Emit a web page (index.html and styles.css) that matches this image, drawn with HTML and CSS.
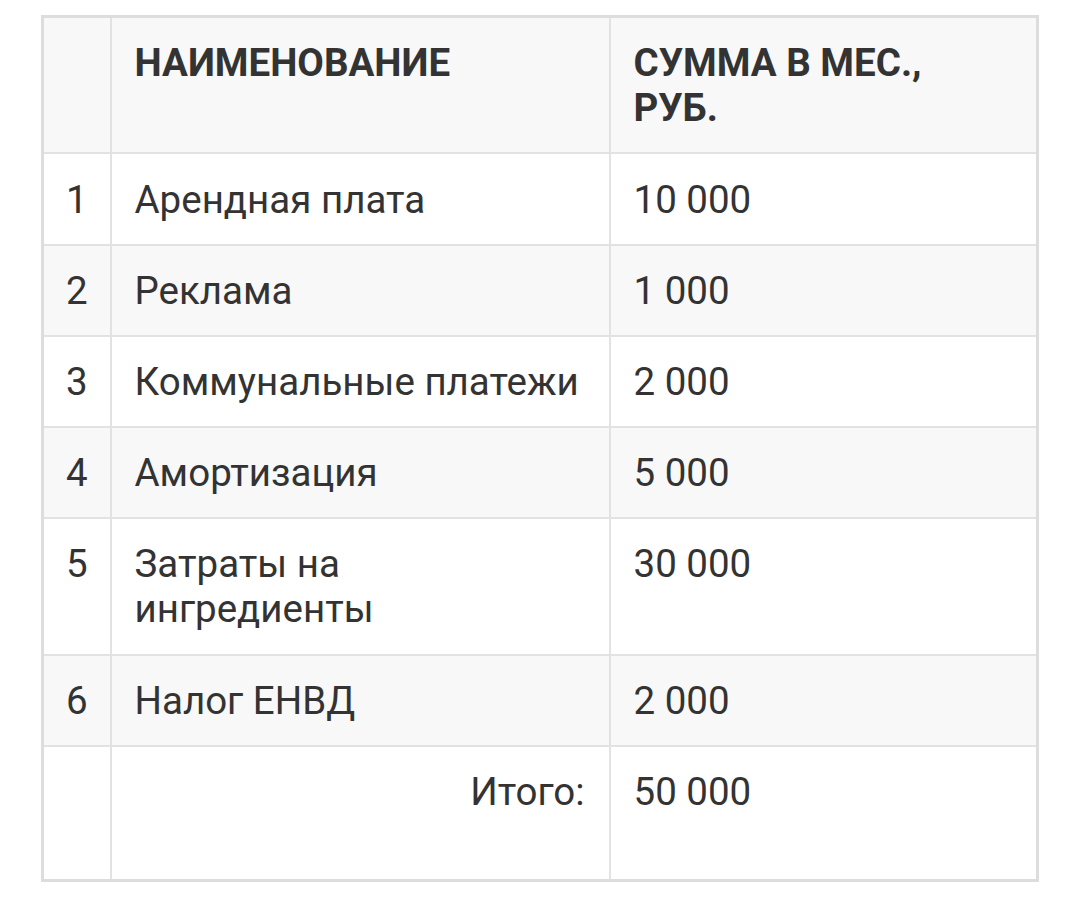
FILE: index.html
```html
<!DOCTYPE html>
<html lang="ru">
<head>
<meta charset="utf-8">
<title>Расходы</title>
<link rel="stylesheet" href="styles.css">
</head>
<body>
<table class="costs">
  <colgroup>
    <col class="c-num">
    <col class="c-name">
    <col class="c-sum">
  </colgroup>
  <thead>
    <tr class="head-row">
      <th></th>
      <th>Наименование</th>
      <th>Сумма в мес., руб.</th>
    </tr>
  </thead>
  <tbody>
    <tr class="first"><td class="num">1</td><td>Арендная плата</td><td>10 000</td></tr>
    <tr class="alt"><td class="num">2</td><td>Реклама</td><td>1 000</td></tr>
    <tr><td class="num">3</td><td>Коммунальные платежи</td><td>2 000</td></tr>
    <tr class="alt"><td class="num">4</td><td>Амортизация</td><td>5 000</td></tr>
    <tr class="tall"><td class="num">5</td><td>Затраты на ингредиенты</td><td>30 000</td></tr>
    <tr class="alt"><td class="num">6</td><td>Налог ЕНВД</td><td>2 000</td></tr>
    <tr class="total"><td class="num"></td><td class="label">Итого:</td><td>50 000</td></tr>
  </tbody>
</table>
</body>
</html>
```

FILE: styles.css
```css
html, body {
  margin: 0;
  padding: 0;
  background: #ffffff;
}

body {
  padding: 15px 0 0 41px;
  font-family: Roboto, "Noto Sans", "Liberation Sans", sans-serif;
  color: #333333;
}

.costs {
  border-collapse: collapse;
  table-layout: fixed;
  width: 998px;
  border: 3px solid #dddddd;
  font-size: 38.5px;
  line-height: 45px;
}

.c-num { width: 68px; }
.c-name { width: 499px; }
.c-sum { width: auto; }

.costs th,
.costs td {
  border: 2px solid #e2e2e2;
  padding: 22px 26px 22px 23px;
  text-align: left;
  vertical-align: top;
}

.costs .first td {
  padding-top: 23px;
}

.costs .tall td {
  padding-bottom: 23px;
}

.costs th {
  font-weight: 700;
  text-transform: uppercase;
}

.head-row,
.alt {
  background: #f8f8f8;
}

.costs td.num {
  text-align: center;
  padding-left: 8px;
  padding-right: 8px;
}

.costs td.label {
  text-align: right;
  padding-right: 24px;
}

.costs .total td {
  padding-bottom: 65px;
}
```
